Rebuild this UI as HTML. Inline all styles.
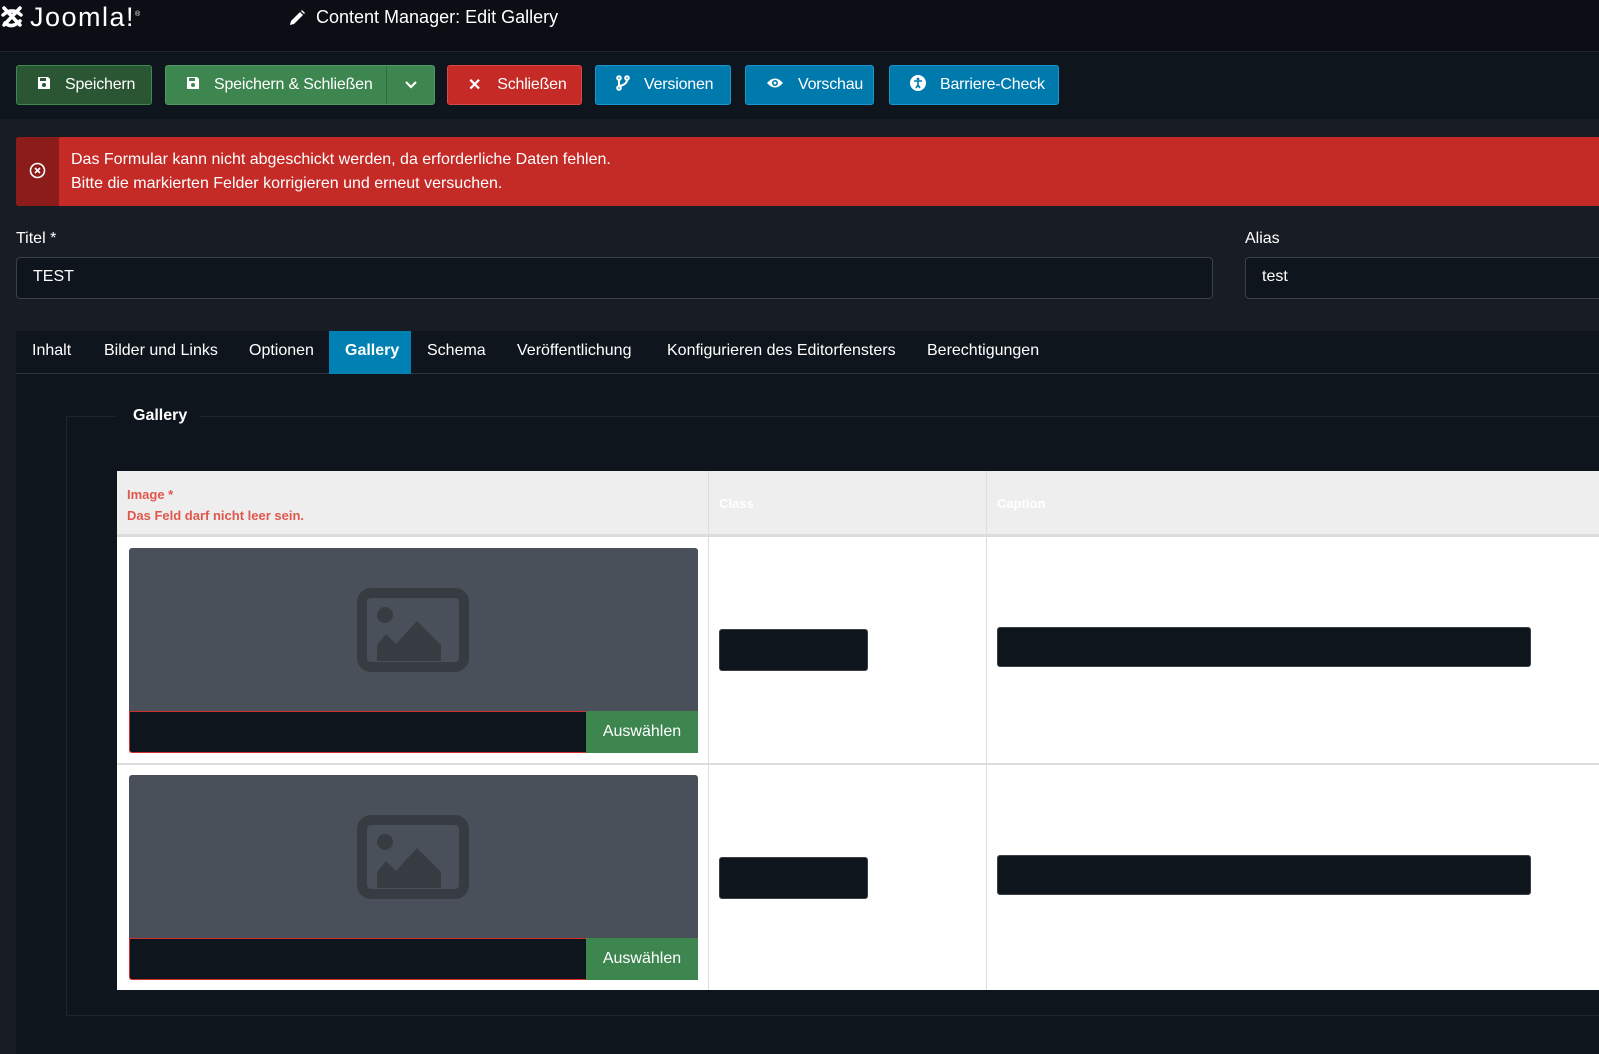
<!DOCTYPE html>
<html><head><meta charset="utf-8"><style>
*{box-sizing:border-box;margin:0;padding:0}
body{width:1599px;height:1054px;overflow:hidden;background:#181c24;font-family:"Liberation Sans",sans-serif;color:#fff;position:relative}
.abs{position:absolute}
.hdr{left:0;top:0;width:1599px;height:52px;background:#0b0e14;border-bottom:1px solid #1e232c}
.tb{left:0;top:52px;width:1599px;height:67px;background:#0f151d}
.btn{position:absolute;top:65px;height:40px;border-radius:3px;font-size:16px;display:flex;align-items:center;letter-spacing:-0.2px}
.g1{background:#2a5634;border:1px solid #3f8a4f}
.g2{background:#3d8650;border:1px solid #4f9a60}
.r{background:#c52a27;border:1px solid #d84a45}
.b{background:#0079ad;border:1px solid #1a96cf}
.ic{display:inline-block;margin:0 14px 0 20px}
.inp{background:#0f151d;border:1px solid #3a3f48;border-radius:4px}
.tab{position:absolute;top:331px;height:43px;line-height:40px;font-size:16px}
</style></head><body>
<div class="abs hdr"></div>
<svg class="abs" style="left:0;top:3px" width="26" height="28" viewBox="0 0 26 28"><g fill="none" stroke="#fff" stroke-width="3.5" stroke-linecap="round"><path d="M4 5 L20 22"/><path d="M20 5 L4 22"/><path d="M3 12 Q12 4 21 12"/><path d="M5 20 Q12 26 20 18"/></g></svg>
<div class="abs" style="left:30px;top:2px;font-size:27px;letter-spacing:1.5px;color:#fff">Joomla!<sup style="font-size:7px">®</sup></div>
<svg class="abs" style="left:288px;top:9px" width="18" height="18" viewBox="0 0 18 18"><path d="M2 16 L3 12 L12 3 L15 6 L6 15 Z" fill="#fff"/><path d="M13 2 L14 1 L17 4 L16 5Z" fill="#fff"/></svg>
<div class="abs" style="left:316px;top:7px;font-size:18px">Content Manager: Edit Gallery</div>
<div class="abs tb"></div>

<div class="btn g1" style="left:16px;width:136px"><span class="ic"><svg width="14" height="14" viewBox="0 0 14 14"><path d="M1 1h10l2 2v10H1z" fill="#fff"/><rect x="3" y="2" width="6" height="3" fill="#2a5634"/><circle cx="7" cy="9" r="2" fill="#2a5634"/></svg></span>Speichern</div>
<div class="btn g2" style="left:165px;width:270px"><span class="ic"><svg width="14" height="14" viewBox="0 0 14 14"><path d="M1 1h10l2 2v10H1z" fill="#fff"/><rect x="3" y="2" width="6" height="3" fill="#3d8650"/><circle cx="7" cy="9" r="2" fill="#3d8650"/></svg></span>Speichern &amp; Schließen<span style="position:absolute;left:220px;top:0;bottom:0;border-left:1px solid #2f6e40"></span><svg style="position:absolute;left:238px;top:14px" width="14" height="10" viewBox="0 0 14 10"><path d="M2 2l5 5 5-5" stroke="#fff" stroke-width="2.2" fill="none"/></svg></div>
<div class="btn r" style="left:447px;width:135px"><span class="ic" style="font-size:16px;font-weight:bold;margin-right:16px">✕</span>Schließen</div>
<div class="btn b" style="left:595px;width:136px"><span class="ic"><svg width="14" height="16" viewBox="0 0 14 16"><g fill="none" stroke="#fff" stroke-width="2"><circle cx="3" cy="3" r="1.8"/><circle cx="3" cy="13" r="1.8"/><circle cx="11" cy="3" r="1.8"/><path d="M3 5v6M11 5q0 4-7 6"/></g></svg></span>Versionen</div>
<div class="btn b" style="left:745px;width:129px"><span class="ic"><svg width="18" height="12" viewBox="0 0 18 12"><path d="M1 6Q9-3 17 6Q9 15 1 6Z" fill="#fff"/><circle cx="9" cy="6" r="3" fill="#0079ad"/><circle cx="9" cy="6" r="1.4" fill="#fff"/></svg></span>Vorschau</div>
<div class="btn b" style="left:889px;width:170px"><span class="ic"><svg width="16" height="16" viewBox="0 0 16 16"><circle cx="8" cy="8" r="8" fill="#fff"/><circle cx="8" cy="4" r="1.4" fill="#0079ad"/><path d="M4 6h8M8 6v4l-2 3M8 10l2 3" stroke="#0079ad" stroke-width="1.6" fill="none"/></svg></span>Barriere-Check</div>

<div class="abs" style="left:16px;top:137px;width:1583px;height:69px;background:#c42a26;border-radius:3px 0 0 3px"></div>
<div class="abs" style="left:16px;top:137px;width:43px;height:69px;background:#8b1c19;border-radius:3px 0 0 3px"></div>
<svg class="abs" style="left:29px;top:162px" width="17" height="17" viewBox="0 0 17 17"><circle cx="8.5" cy="8.5" r="7" fill="none" stroke="#fff" stroke-width="1.6"/><path d="M6 6l5 5M11 6l-5 5" stroke="#fff" stroke-width="1.6"/></svg>
<div class="abs" style="left:71px;top:148px;font-size:16px;line-height:24px">Das Formular kann nicht abgeschickt werden, da erforderliche Daten fehlen.<br>Bitte die markierten Felder korrigieren und erneut versuchen.</div>

<div class="abs" style="left:16px;top:230px;font-size:16px">Titel *</div>
<div class="abs inp" style="left:16px;top:257px;width:1197px;height:42px"></div>
<div class="abs" style="left:33px;top:268px;font-size:16px">TEST</div>
<div class="abs" style="left:1245px;top:230px;font-size:16px">Alias</div>
<div class="abs inp" style="left:1245px;top:257px;width:380px;height:42px"></div>
<div class="abs" style="left:1262px;top:268px;font-size:16px">test</div>

<div class="abs" style="left:16px;top:331px;width:1583px;height:723px;background:#0f151d"></div>
<div class="abs" style="left:16px;top:373px;width:1583px;height:1px;background:#2d323b"></div>
<div class="abs" style="left:329px;top:331px;width:82px;height:43px;background:#0080b3"></div>
<div class="tab" style="left:32px">Inhalt</div>
<div class="tab" style="left:104px">Bilder und Links</div>
<div class="tab" style="left:249px">Optionen</div>
<div class="tab" style="left:345px;font-weight:bold">Gallery</div>
<div class="tab" style="left:427px">Schema</div>
<div class="tab" style="left:517px">Veröffentlichung</div>
<div class="tab" style="left:667px">Konfigurieren des Editorfensters</div>
<div class="tab" style="left:927px">Berechtigungen</div>

<div class="abs" style="left:66px;top:416px;width:1540px;height:600px;border:1px solid #1f252e"></div>
<div class="abs" style="left:116px;top:405px;width:83px;height:22px;background:#0f151d"></div>
<div class="abs" style="left:133px;top:407px;font-size:16px;font-weight:bold">Gallery</div>

<div class="abs" style="left:117px;top:471px;width:1482px;height:519px;background:#fff"></div>
<div class="abs" style="left:117px;top:471px;width:1482px;height:66px;background:#eee;border-bottom:3px solid #dcdcdc"></div>
<div class="abs" style="left:708px;top:471px;width:1px;height:519px;background:#ddd"></div>
<div class="abs" style="left:986px;top:471px;width:1px;height:519px;background:#ddd"></div>
<div class="abs" style="left:117px;top:763px;width:1482px;height:2px;background:#ddd"></div>
<div class="abs" style="left:127px;top:484px;font-size:13px;font-weight:bold;color:#e0584d;line-height:21px">Image *<br>Das Feld darf nicht leer sein.</div>
<div class="abs" style="left:719px;top:496px;font-size:13px;font-weight:bold;color:#fff">Class</div>
<div class="abs" style="left:997px;top:496px;font-size:13px;font-weight:bold;color:#fff">Caption</div>

<!-- row 1 -->
<div class="abs" style="left:129px;top:548px;width:569px;height:164px;background:#4a5059;border-radius:3px 3px 0 0"></div>
<svg class="abs" style="left:357px;top:588px" width="112" height="84" viewBox="0 0 112 84"><rect x="5" y="5" width="102" height="74" rx="9" fill="none" stroke="#373c42" stroke-width="10"/><circle cx="28" cy="27" r="8" fill="#373c42"/><path d="M20 73V57l9-11 10 10 21-23 24 24v16z" fill="#373c42"/></svg>
<div class="abs" style="left:129px;top:711px;width:458px;height:42px;background:#0f151d;border:1px solid #d0302b;border-right:none;border-radius:0 0 0 3px"></div>
<div class="abs" style="left:586px;top:711px;width:112px;height:42px;background:#3d8650;font-size:16px;line-height:42px;text-align:center">Auswählen</div>
<div class="abs" style="left:719px;top:629px;width:149px;height:42px;background:#0f151d;border:1px solid #3a3f48;border-radius:3px"></div>
<div class="abs" style="left:997px;top:627px;width:534px;height:40px;background:#0f151d;border:1px solid #3a3f48;border-radius:3px"></div>

<!-- row 2 -->
<div class="abs" style="left:129px;top:775px;width:569px;height:164px;background:#4a5059;border-radius:3px 3px 0 0"></div>
<svg class="abs" style="left:357px;top:815px" width="112" height="84" viewBox="0 0 112 84"><rect x="5" y="5" width="102" height="74" rx="9" fill="none" stroke="#373c42" stroke-width="10"/><circle cx="28" cy="27" r="8" fill="#373c42"/><path d="M20 73V57l9-11 10 10 21-23 24 24v16z" fill="#373c42"/></svg>
<div class="abs" style="left:129px;top:938px;width:458px;height:42px;background:#0f151d;border:1px solid #d0302b;border-right:none;border-radius:0 0 0 3px"></div>
<div class="abs" style="left:586px;top:938px;width:112px;height:42px;background:#3d8650;font-size:16px;line-height:42px;text-align:center">Auswählen</div>
<div class="abs" style="left:719px;top:857px;width:149px;height:42px;background:#0f151d;border:1px solid #3a3f48;border-radius:3px"></div>
<div class="abs" style="left:997px;top:855px;width:534px;height:40px;background:#0f151d;border:1px solid #3a3f48;border-radius:3px"></div>
</body></html>
